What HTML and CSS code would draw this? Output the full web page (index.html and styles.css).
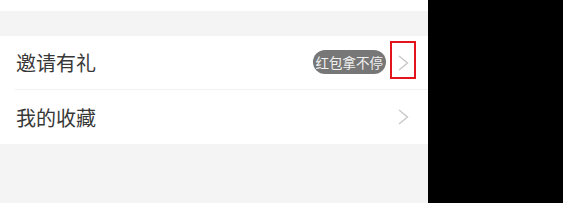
FILE: index.html
```html
<!DOCTYPE html>
<html lang="zh">
<head>
<meta charset="utf-8">
<link rel="stylesheet" href="styles.css">
</head>
<body>
<div class="page">
  <div class="screen">
    <div class="top"></div>
    <div class="gap"></div>
    <div class="list">
      <div class="row">
        <span class="label">邀请有礼</span>
        <span class="badge">红包拿不停</span>
        <svg class="chev" viewBox="0 0 11 16" width="11" height="16"><path d="M1 1 L9.5 8 L1 15" fill="none" stroke="#c8c8c8" stroke-width="1.4"/></svg>
      </div>
      <div class="sep"></div>
      <div class="row row2">
        <span class="label">我的收藏</span>
        <svg class="chev" viewBox="0 0 11 16" width="11" height="16"><path d="M1 1 L9.5 8 L1 15" fill="none" stroke="#c8c8c8" stroke-width="1.4"/></svg>
      </div>
    </div>
    <div class="highlight"></div>
  </div>
  <div class="dark"></div>
</div>
</body>
</html>
```

FILE: styles.css
```css
html, body {
  margin: 0;
  padding: 0;
  background: #000;
}
.page {
  display: flex;
  width: 563px;
  height: 203px;
  overflow: hidden;
}
.screen {
  position: relative;
  width: 428px;
  height: 203px;
  background: #f4f4f4;
  font-family: "Noto Sans CJK SC", "Noto Sans", sans-serif;
}
.dark {
  flex: 1;
  background: #000;
}
.top {
  height: 11px;
  background: #fff;
}
.gap {
  height: 25px;
}
.list {
  background: #fff;
}
.row {
  display: flex;
  align-items: center;
  height: 53px;
  padding: 0 19px 0 16px;
}
.row2 {
  height: 54px;
}
.label {
  flex: 1;
  font-size: 20px;
  color: #383838;
  line-height: 1;
  padding-top: 1px;
}
.badge {
  height: 24px;
  line-height: 24px;
  padding: 0 3px;
  border-radius: 12px;
  background: #777;
  color: #f2f2f2;
  font-size: 13.5px;
  margin-right: 12px;
  margin-top: -2px;
}
.chev {
  display: block;
  flex: none;
}
.sep {
  height: 1px;
  margin-left: 15px;
  background: #f1f1f1;
}
.highlight {
  position: absolute;
  left: 390px;
  top: 41px;
  width: 26px;
  height: 38px;
  box-sizing: border-box;
  border: 2px solid #e3141b;
}
```
